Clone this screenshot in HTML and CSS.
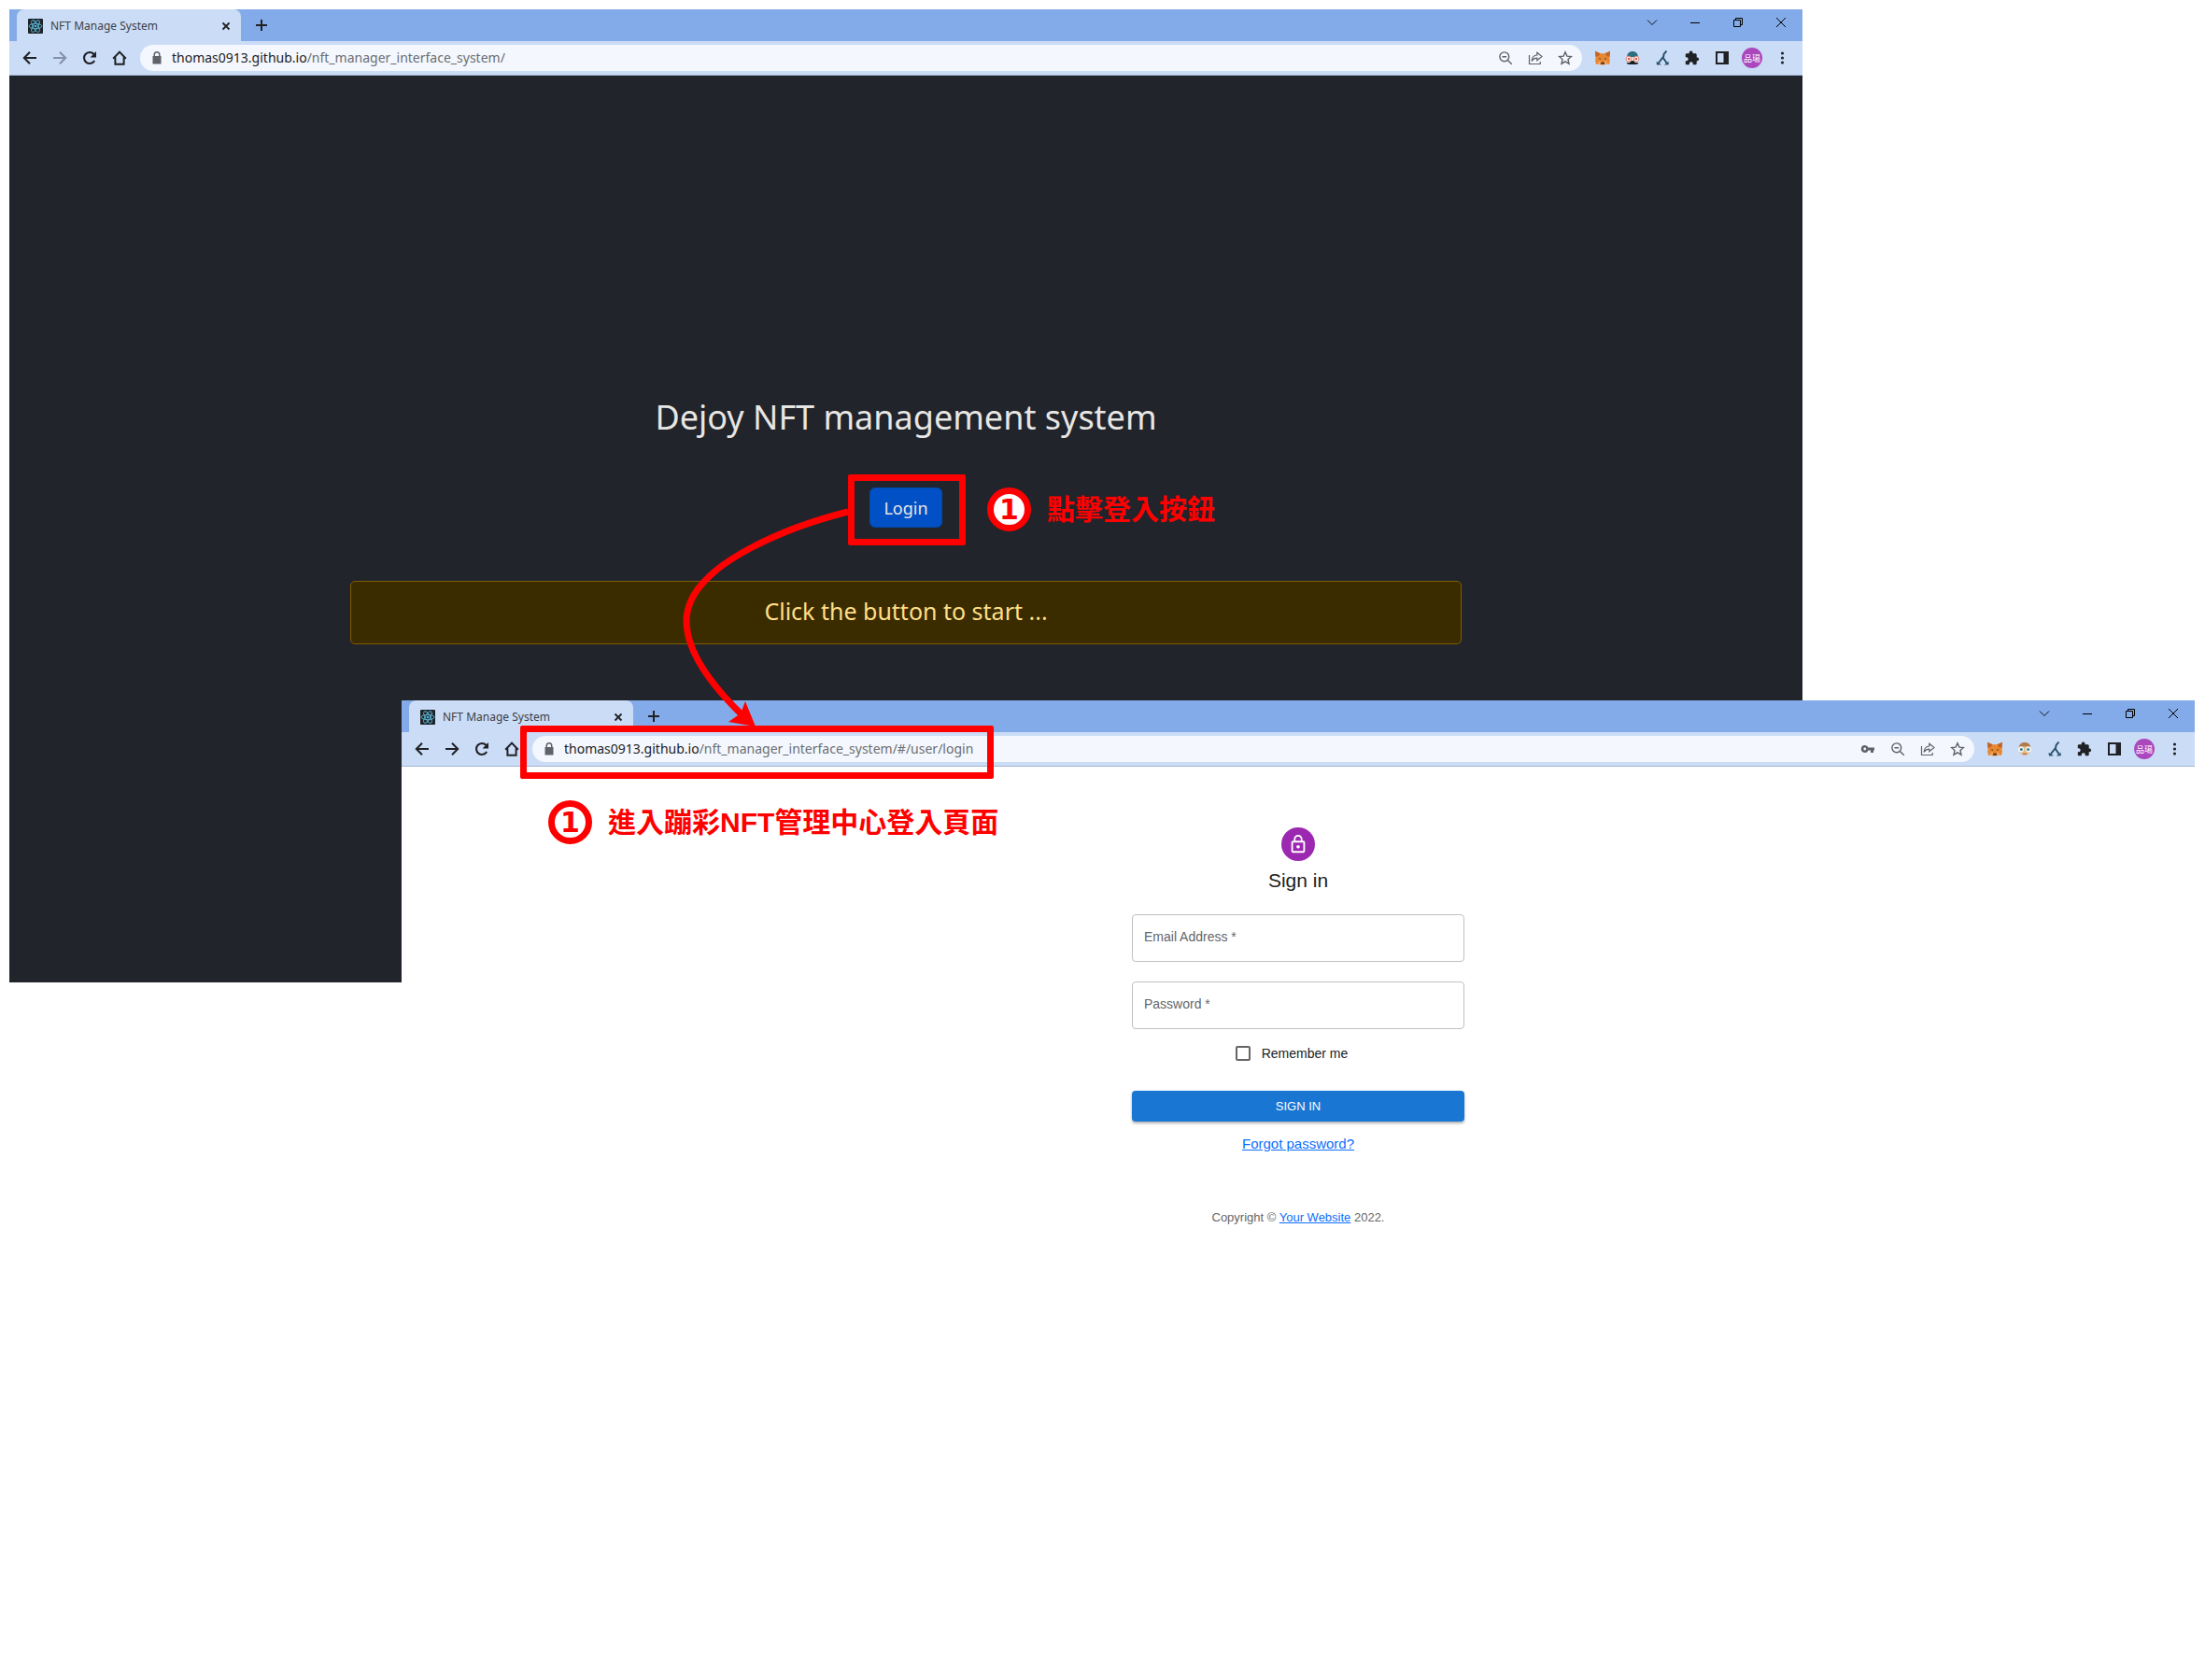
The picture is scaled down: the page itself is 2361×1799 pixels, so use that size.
FILE: index.html
```html
<!DOCTYPE html>
<html lang="zh-Hant">
<head>
<meta charset="utf-8">
<meta name="viewport" content="width=device-width, initial-scale=1">
<title>NFT Manage System</title>
<link rel="stylesheet" href="styles.css">
</head>
<body>
<svg class="sprite" aria-hidden="true">
  <symbol id="i-react" viewBox="0 0 16 16"><rect width="16" height="16" rx="1" fill="#20232a"/><g fill="none" stroke="#58bcd8" stroke-width="0.9"><ellipse cx="8" cy="8" rx="7" ry="2.7"/><ellipse cx="8" cy="8" rx="7" ry="2.7" transform="rotate(60 8 8)"/><ellipse cx="8" cy="8" rx="7" ry="2.7" transform="rotate(120 8 8)"/></g><circle cx="8" cy="8" r="1.3" fill="#58bcd8"/></symbol>
  <symbol id="i-close-tab" viewBox="0 0 16 16"><path d="M4.500 4.500l7 7m0-7l-7 7" stroke="#202124" stroke-width="1.800"/></symbol>
  <symbol id="i-plus" viewBox="0 0 16 16"><path d="M8 2v12M2 8h12" stroke="#202124" stroke-width="2"/></symbol>
  <symbol id="i-back" viewBox="0 0 16 16"><path d="M15 8H2.500M8 1.800L1.800 8L8 14.200" fill="none" stroke="currentColor" stroke-width="2"/></symbol>
  <symbol id="i-forward" viewBox="0 0 16 16"><path d="M1 8h12.500M8 1.800L14.200 8L8 14.200" fill="none" stroke="currentColor" stroke-width="2"/></symbol>
  <symbol id="i-reload" viewBox="0 0 16 16"><path d="M13.200 11A6 6 0 1 1 12.400 3.800L14 5.400" fill="none" stroke="currentColor" stroke-width="2.100"/><path d="M15 1v6.400H8.600z" fill="currentColor"/></symbol>
  <symbol id="i-home" viewBox="0 0 16 16"><path d="M1.200 8.800L8 1.600l6.800 7.200M3.400 7.500V14.800h9.200V7.500" fill="none" stroke="currentColor" stroke-width="2"/></symbol>
  <symbol id="i-lock" viewBox="0 0 16 16"><path d="M4.500 6V4.500a3.500 3.500 0 0 1 7 0V6h1v8.500h-9V6zm1.500 0h4V4.500a2 2 0 0 0-4 0z" fill="#5f6368"/></symbol>
  <symbol id="i-key" viewBox="0 0 16 16"><path d="M4.800 4a4 4 0 1 0 3.700 5.500H11V12h3V9.500h1v-3H8.500A4 4 0 0 0 4.800 4zm0 2.600a1.400 1.400 0 1 1 0 2.800 1.400 1.400 0 0 1 0-2.800z" fill="#5f6368"/></symbol>
  <symbol id="i-zoomout" viewBox="0 0 16 16"><g fill="none" stroke="#5f6368" stroke-width="1.400"><circle cx="6.800" cy="6.800" r="4.900"/><path d="M10.400 10.400l4.400 4.400M4.500 6.800h4.600"/></g></symbol>
  <symbol id="i-share" viewBox="0 0 16 16"><g fill="none" stroke="#5f6368" stroke-width="1.200"><path d="M1.500 5v9.500h11.700V12"/><path d="M4 11.300C4.400 7.500 6.500 5.200 9.800 5V2.300L15 6.500 9.800 10.800V8.200C7.500 8.200 5.600 9 4 11.300z"/></g></symbol>
  <symbol id="i-star" viewBox="0 0 16 16"><path d="M8 1.800l1.900 4.300 4.600.4-3.500 3.100 1 4.600L8 11.800l-4 2.400 1-4.600-3.500-3.100 4.600-.4z" fill="none" stroke="#5f6368" stroke-width="1.400"/></symbol>
  <symbol id="i-fox" viewBox="0 0 16 16"><path d="M0 .8L5.500 3.200h5L16 .8l-.5 7 .3 3.500-.8 3.700-3.800-.5-1 1H5.800l-1-1-3.800.5L.2 11.300l.3-3.500z" fill="#e8872f"/><path d="M0 .8L5.500 3.200 3.500 6.300.5 6.800zM16 .8l-5.500 2.400 2 3.100 3 .5z" fill="#c0642a"/><path d="M3.500 8.300l2.500.4-.6 1.400zM12.500 8.300l-2.500.4.6 1.400zM6.300 12.800h3.400l.4 1.600H5.900z" fill="#3a2b25"/><path d="M5 11l1.300 1.800-.7 1.500-3.600.2zM11 11l-1.300 1.800.7 1.500 3.600.2z" fill="#f4a661"/></symbol>
  <symbol id="i-mask" viewBox="0 0 16 16"><path d="M2 8C2 3 4.500 1 8 1s6 2 6 7z" fill="#2b6f80"/><path d="M1.500 13h13L13 15H3z" fill="#26343b"/><rect x="2.500" y="7" width="11" height="6" fill="#f1d8cf"/><circle cx="3.800" cy="9" r="2.800" fill="#fff" stroke="#e08478" stroke-width="1"/><circle cx="12.200" cy="9" r="2.800" fill="#fff" stroke="#e08478" stroke-width="1"/><circle cx="4" cy="9" r="1.300" fill="#d4574a"/><circle cx="12" cy="9" r="1.300" fill="#d4574a"/><path d="M5 15c0-3 1.200-4 3-4s3 1 3 4z" fill="#1d1d1f"/></symbol>
  <symbol id="i-face" viewBox="0 0 16 16"><ellipse cx="8" cy="8" rx="6.500" ry="7" fill="#e6b88e"/><path d="M1.500 7C2 3 4.500 1 8 1s6 2 6.500 6C11 4.500 5 4.500 1.500 7z" fill="#b07b4c"/><circle cx="4" cy="8.500" r="2.800" fill="#fff" stroke="#f3efe6" stroke-width="1"/><circle cx="12" cy="8.500" r="2.800" fill="#fff" stroke="#f3efe6" stroke-width="1"/><circle cx="4.300" cy="8.500" r="1.600" fill="#36808c"/><circle cx="11.700" cy="8.500" r="1.600" fill="#36808c"/><path d="M6 13.300h4" stroke="#a35a40" stroke-width="1"/></symbol>
  <symbol id="i-fork" viewBox="0 0 16 16"><path d="M12.500.5L9.600 3.800 9.200 6.500 3.800 13.500M8.600 7.500l4 6" fill="none" stroke="#27506b" stroke-width="1.900"/><path d="M1.500 12l.5 3.500 5-.2-2.500-1.800zM14.500 11.800l.3 3.500-5 .2 2.200-1.800z" fill="#27506b"/></symbol>
  <symbol id="i-puzzle" viewBox="0 0 16 16"><path d="M13.700 7.500h-1V4.600c0-.8-.6-1.400-1.400-1.400H8.500V2.300a1.900 1.900 0 0 0-3.800 0v.9H2.100C1.300 3.200.8 3.800.8 4.600v2.600h.9a2 2 0 0 1 0 4H.8v2.700c0 .8.500 1.400 1.300 1.400h2.700v-1a2 2 0 0 1 4 0v1h2.500c.8 0 1.400-.6 1.400-1.400v-2.700h1a1.900 1.900 0 0 0 0-3.700z" fill="#202124"/></symbol>
  <symbol id="i-panel" viewBox="0 0 16 16"><path d="M1 1h14v14H1zM3 3v10h6.500V3z" fill="#202124" fill-rule="evenodd"/></symbol>
  <symbol id="i-dots" viewBox="0 0 16 16"><g fill="#202124"><circle cx="8.500" cy="3" r="1.600"/><circle cx="8.500" cy="8" r="1.600"/><circle cx="8.500" cy="13" r="1.600"/></g></symbol>
  <symbol id="i-chevron" viewBox="0 0 12 12"><path d="M1 3.500l5 5 5-5" fill="none" stroke="#111" stroke-width="1"/></symbol>
  <symbol id="i-min" viewBox="0 0 12 12"><path d="M1 6.500h10" stroke="#000" stroke-width="1"/></symbol>
  <symbol id="i-restore" viewBox="0 0 12 12"><path d="M1.500 3.500h7v7h-7zM3.500 3.500v-2h7v7h-2" fill="none" stroke="#000" stroke-width="1"/></symbol>
  <symbol id="i-x" viewBox="0 0 12 12"><path d="M1 1l10 10M11 1L1 11" stroke="#000" stroke-width="1"/></symbol>
  <symbol id="i-lock-outline" viewBox="0 0 24 24"><path fill="#fff" d="M12 17c1.100 0 2-.9 2-2s-.9-2-2-2-2 .9-2 2 .9 2 2 2zm6-9h-1V6c0-2.760-2.240-5-5-5S7 3.240 7 6v2H6c-1.100 0-2 .9-2 2v10c0 1.100.9 2 2 2h12c1.100 0 2-.9 2-2V10c0-1.100-.9-2-2-2zM8.900 6c0-1.710 1.390-3.100 3.100-3.100s3.100 1.390 3.100 3.100v2H8.900V6zM18 20H6V10h12v10z"/></symbol>
</svg>

<main class="desk">
  <section class="window window-home" aria-label="Home">
    <header class="tabs">
      <div class="tab"><svg class="ico"><use href="#i-react"/></svg><span class="tab-title">NFT Manage System</span><button class="icon-btn tab-close" aria-label="Close tab"><svg class="ico"><use href="#i-close-tab"/></svg></button></div>
      <button class="icon-btn new-tab" aria-label="New tab"><svg class="ico"><use href="#i-plus"/></svg></button>
      <div class="controls">
        <button aria-label="Search tabs"><svg><use href="#i-chevron"/></svg></button>
        <button aria-label="Minimize"><svg><use href="#i-min"/></svg></button>
        <button aria-label="Restore"><svg><use href="#i-restore"/></svg></button>
        <button aria-label="Close"><svg><use href="#i-x"/></svg></button>
      </div>
    </header>
    <nav class="toolbar">
      <button class="icon-btn" aria-label="Back"><svg class="ico"><use href="#i-back"/></svg></button>
      <button class="icon-btn off" aria-label="Forward"><svg class="ico"><use href="#i-forward"/></svg></button>
      <button class="icon-btn" aria-label="Reload"><svg class="ico"><use href="#i-reload"/></svg></button>
      <button class="icon-btn" aria-label="Home"><svg class="ico"><use href="#i-home"/></svg></button>
      <div class="omnibox">
        <svg class="ico"><use href="#i-lock"/></svg>
        <div class="url" role="textbox" aria-label="Address" contenteditable="true" spellcheck="false"><span class="host">thomas0913.github.io</span>/nft_manager_interface_system/</div>
        <button class="icon-btn" aria-label="Zoom"><svg class="ico"><use href="#i-zoomout"/></svg></button>
        <button class="icon-btn" aria-label="Share"><svg class="ico"><use href="#i-share"/></svg></button>
        <button class="icon-btn" aria-label="Bookmark"><svg class="ico"><use href="#i-star"/></svg></button>
      </div>
      <div class="extensions">
        <button class="icon-btn" aria-label="MetaMask"><svg class="ico"><use href="#i-fox"/></svg></button>
        <button class="icon-btn" aria-label="Assistant"><svg class="ico"><use href="#i-mask"/></svg></button>
        <button class="icon-btn" aria-label="Fork"><svg class="ico"><use href="#i-fork"/></svg></button>
        <button class="icon-btn" aria-label="Extensions"><svg class="ico"><use href="#i-puzzle"/></svg></button>
        <button class="icon-btn" aria-label="Side panel"><svg class="ico"><use href="#i-panel"/></svg></button>
        <button class="icon-btn" aria-label="Profile"><span class="profile">品瑒</span></button>
        <button class="icon-btn" aria-label="Menu"><svg class="ico"><use href="#i-dots"/></svg></button>
      </div>
    </nav>
    <div class="home">
      <h1>Dejoy NFT management system</h1>
      <div class="login-spot">
        <button class="login-btn">Login</button>
        <div class="frame frame-login"></div>
        <svg class="arrow" viewBox="0 0 200 250" aria-hidden="true"><path d="M178 17C130 29 5 70 5 134C5 168 32 203 65 235" fill="none" stroke="#f00" stroke-width="7"/><path d="M79 247L68 220 63 233 50 242z" fill="#f00"/></svg>
        <div class="step step-login"><span class="step-no">1</span><span>點擊登入按鈕</span></div>
      </div>
      <p class="notice">Click the button to start ...</p>
    </div>
  </section>

  <section class="window window-login" aria-label="Sign in">
    <header class="tabs">
      <div class="tab"><svg class="ico"><use href="#i-react"/></svg><span class="tab-title">NFT Manage System</span><button class="icon-btn tab-close" aria-label="Close tab"><svg class="ico"><use href="#i-close-tab"/></svg></button></div>
      <button class="icon-btn new-tab" aria-label="New tab"><svg class="ico"><use href="#i-plus"/></svg></button>
      <div class="controls">
        <button aria-label="Search tabs"><svg><use href="#i-chevron"/></svg></button>
        <button aria-label="Minimize"><svg><use href="#i-min"/></svg></button>
        <button aria-label="Restore"><svg><use href="#i-restore"/></svg></button>
        <button aria-label="Close"><svg><use href="#i-x"/></svg></button>
      </div>
    </header>
    <nav class="toolbar">
      <button class="icon-btn" aria-label="Back"><svg class="ico"><use href="#i-back"/></svg></button>
      <button class="icon-btn" aria-label="Forward"><svg class="ico"><use href="#i-forward"/></svg></button>
      <button class="icon-btn" aria-label="Reload"><svg class="ico"><use href="#i-reload"/></svg></button>
      <button class="icon-btn" aria-label="Home"><svg class="ico"><use href="#i-home"/></svg></button>
      <div class="omnibox">
        <svg class="ico"><use href="#i-lock"/></svg>
        <div class="url" role="textbox" aria-label="Address" contenteditable="true" spellcheck="false"><span class="host">thomas0913.github.io</span>/nft_manager_interface_system/#/user/login</div>
        <button class="icon-btn" aria-label="Passwords"><svg class="ico"><use href="#i-key"/></svg></button>
        <button class="icon-btn" aria-label="Zoom"><svg class="ico"><use href="#i-zoomout"/></svg></button>
        <button class="icon-btn" aria-label="Share"><svg class="ico"><use href="#i-share"/></svg></button>
        <button class="icon-btn" aria-label="Bookmark"><svg class="ico"><use href="#i-star"/></svg></button>
        <div class="frame frame-url"></div>
        <div class="step step-url"><span class="step-no">1</span><span>進入蹦彩NFT管理中心登入頁面</span></div>
      </div>
      <div class="extensions">
        <button class="icon-btn" aria-label="MetaMask"><svg class="ico"><use href="#i-fox"/></svg></button>
        <button class="icon-btn" aria-label="Assistant"><svg class="ico"><use href="#i-face"/></svg></button>
        <button class="icon-btn" aria-label="Fork"><svg class="ico"><use href="#i-fork"/></svg></button>
        <button class="icon-btn" aria-label="Extensions"><svg class="ico"><use href="#i-puzzle"/></svg></button>
        <button class="icon-btn" aria-label="Side panel"><svg class="ico"><use href="#i-panel"/></svg></button>
        <button class="icon-btn" aria-label="Profile"><span class="profile">品瑒</span></button>
        <button class="icon-btn" aria-label="Menu"><svg class="ico"><use href="#i-dots"/></svg></button>
      </div>
    </nav>
    <div class="signin">
      <div class="avatar"><svg><use href="#i-lock-outline"/></svg></div>
      <h2>Sign in</h2>
      <form class="form">
        <div class="field"><input id="email" type="email" required><label for="email">Email Address *</label></div>
        <div class="field"><input id="password" type="password" required><label for="password">Password *</label></div>
        <label class="remember"><input type="checkbox"><span>Remember me</span></label>
        <button class="submit" type="submit">SIGN IN</button>
        <a class="forgot" href="#forgot">Forgot password?</a>
      </form>
      <p class="copyright">Copyright © <a href="#site">Your Website</a> 2022.</p>
    </div>
  </section>
</main>
</body>
</html>
```
FILE: styles.css
```css
* { box-sizing: border-box; }

body {
  margin: 0;
  background: #fff;
  font-family: "Noto Sans", "Noto Sans CJK TC", sans-serif;
}

button { padding: 0; border: 0; background: none; font: inherit; color: inherit; cursor: pointer; }
h1, h2, p { margin: 0; font-weight: 400; }
.sprite { position: absolute; width: 0; height: 0; }

/* Two overlapping browser windows */
.desk {
  display: grid;
  grid-template-columns: 420px minmax(0, 1fr) 420px;
  grid-template-rows: 740px 302px auto;
  min-height: 100vh;
  padding: 10px 11px 0 10px;
}
.window { display: flex; flex-direction: column; min-width: 0; }
.window-home { grid-area: 1 / 1 / 3 / 3; background: #21242b; }
.window-login { grid-area: 2 / 2 / 4 / 4; background: #fff; position: relative; }

/* Browser chrome */
.tabs { display: flex; height: 34px; background: #84abe9; padding-left: 8px; }
.tab {
  display: flex;
  align-items: center;
  gap: 8px;
  width: 240px;
  padding: 2px 8px 0 12px;
  border-radius: 8px 8px 0 0;
  background: #cbdcf7;
}
.ico { display: block; width: 16px; height: 16px; flex: none; }
.tab-title { flex: 1; font-size: 12px; line-height: 16px; color: #3c4043; }
.icon-btn { display: flex; align-items: center; justify-content: center; width: 32px; height: 28px; flex: none; }
.tab-close { width: 16px; }
.new-tab { width: 44px; height: 34px; }
.controls { display: flex; margin-left: auto; }
.controls button { display: flex; align-items: center; justify-content: center; width: 46px; height: 28px; }
.controls svg { width: 12px; height: 12px; }

.toolbar {
  display: flex;
  align-items: center;
  height: 37px;
  padding: 0 6px;
  border-bottom: 1px solid #a5b6d3;
  background: #cbdcf7;
  color: #202124;
}
.off { color: #8390a8; }
.omnibox {
  position: relative;
  display: flex;
  align-items: center;
  flex: 1;
  min-width: 0;
  height: 28px;
  margin: 0 6px;
  padding: 0 2px 0 10px;
  border-radius: 14px;
  background: #f4f7fd;
}
.url { flex: 1; min-width: 0; padding-left: 8px; font-size: 14px; line-height: 20px; white-space: nowrap; color: #6a6e73; }
.host { color: #202124; }
.extensions { display: flex; }
.profile {
  display: flex;
  align-items: center;
  justify-content: center;
  width: 22px;
  height: 22px;
  border-radius: 50%;
  background: #ab47bc;
  color: #fff;
  font-size: 9px;
}

/* Landing page */
.home { display: flex; flex-direction: column; align-items: center; flex: 1; padding: 338px 16px 0; }
.home h1 { font-size: 36px; line-height: 56px; color: #e8e6e3; }
.login-spot { position: relative; margin: 47px 0 57px; }
.login-btn {
  display: block;
  width: 78px;
  height: 43px;
  border: 1px solid #0048ab;
  border-radius: 6px;
  background: #0250c5;
  color: #e8e6e3;
  font-size: 18px;
}
.notice {
  width: 63%;
  padding: 13px 15px 17px;
  border: 1px solid #7f5c00;
  border-radius: 5px;
  background: #3b2c00;
  color: #ffdf86;
  font-size: 25px;
  line-height: 36px;
  text-align: center;
}

/* Red callouts */
.frame { position: absolute; border: 7px solid #f00; border-radius: 2px; pointer-events: none; }
.frame-login { inset: -14px -25px -19px -23px; }
.frame-url { left: -13px; top: -11px; width: 507px; height: 57px; }
.arrow { position: absolute; z-index: 2; left: -201px; top: 9px; width: 200px; height: 250px; }
.step {
  position: absolute;
  display: flex;
  align-items: center;
  gap: 17px;
  color: #f00;
  font-family: "Liberation Sans", "Noto Sans CJK TC", sans-serif;
  font-size: 30px;
  font-weight: 700;
  line-height: 47px;
  white-space: nowrap;
}
.step-no {
  width: 47px;
  height: 47px;
  border: 7px solid #f00;
  border-radius: 50%;
  background: #fff;
  font-family: "DejaVu Sans", sans-serif;
  line-height: 33px;
  text-align: center;
}
.step-login { left: 126px; top: 0; }
.step-url { left: 17px; top: 69px; }

/* Sign-in page */
.signin {
  display: flex;
  flex-direction: column;
  align-items: center;
  flex: 1;
  padding: 65px 16px 0;
  font-family: "Liberation Sans", Arial, sans-serif;
}
.avatar { display: flex; align-items: center; justify-content: center; width: 36px; height: 36px; border-radius: 50%; background: #9c27b0; }
.avatar svg { width: 22px; height: 22px; }
.signin h2 { margin-top: 7px; font-size: 21px; line-height: 28px; color: #212121; }
.form { display: flex; flex-direction: column; align-items: center; width: 356px; margin-top: 22px; font-size: 14px; }
.field { display: grid; align-items: center; width: 100%; height: 51px; margin-bottom: 21px; }
.field input, .field label { grid-area: 1 / 1; }
.field input { width: 100%; height: 51px; padding: 0 13px; border: 1px solid #c0c0c0; border-radius: 4px; background: #fff; font: inherit; }
.field label { padding: 0 13px 4px; color: #666; pointer-events: none; }
.remember { display: flex; align-items: center; gap: 12px; height: 20px; margin: -5px 14px 0 0; color: #212121; }
.remember input { appearance: none; width: 16px; height: 16px; margin: 0; border: 2px solid #666; border-radius: 2px; background: #fff; }
.submit {
  width: 100%;
  height: 33px;
  margin: 30px 0 15px;
  border-radius: 4px;
  background: #1976d2;
  box-shadow: 0 2px 3px rgba(0, 0, 0, 0.3);
  color: #fff;
  font-size: 13px;
  font-weight: 500;
}
.signin a { color: #0d6efd; }
.forgot { font-size: 15px; line-height: 18px; }
.copyright { margin-top: 61px; font-size: 13px; line-height: 18px; color: #666; }
```
